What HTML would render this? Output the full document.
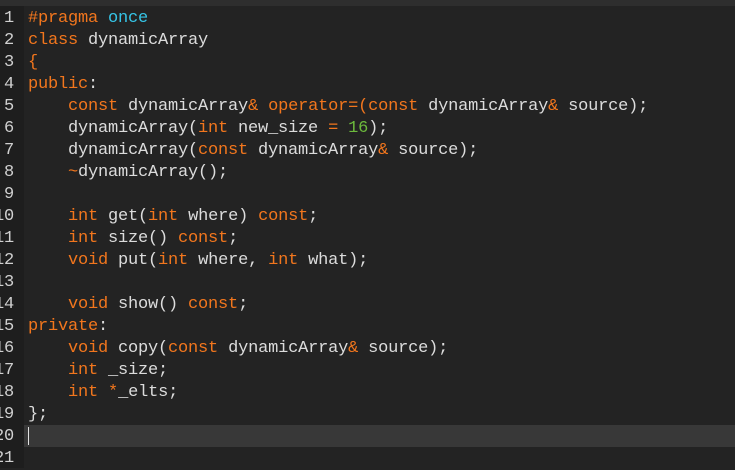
<!DOCTYPE html>
<html><head><meta charset="utf-8"><style>
html,body{margin:0;padding:0;}
body{width:735px;height:468px;background:#232323;position:relative;overflow:hidden;font-family:"Liberation Mono",monospace;font-size:17px;letter-spacing:-0.2px;}
.top{position:absolute;left:0;top:0;width:735px;height:6px;background:#2e2e2e;}
.gut{position:absolute;left:0;top:6px;width:24px;height:462px;background:#1e1e1e;}
.cur{position:absolute;left:24px;top:425px;width:711px;height:22px;background:#383838;}
.caret{position:absolute;left:28px;top:427px;width:1px;height:18px;background:#e0e0e0;}
.ln{position:absolute;right:721px;width:40px;text-align:right;color:#d0d0d0;height:22px;line-height:22px;margin-top:1px;}
.code{position:absolute;left:28px;top:8px;color:#dcdcdc;white-space:pre;line-height:22px;}
.k{color:#f2761d;}.c{color:#35c4e6;}.n{color:#6cba3c;}
</style></head><body>
<div class="top"></div><div class="gut"></div><div class="cur"></div><div class="caret"></div>
<div class="ln" style="top:7px">1</div><div class="ln" style="top:29px">2</div><div class="ln" style="top:51px">3</div><div class="ln" style="top:73px">4</div><div class="ln" style="top:95px">5</div><div class="ln" style="top:117px">6</div><div class="ln" style="top:139px">7</div><div class="ln" style="top:161px">8</div><div class="ln" style="top:183px">9</div><div class="ln" style="top:205px">10</div><div class="ln" style="top:227px">11</div><div class="ln" style="top:249px">12</div><div class="ln" style="top:271px">13</div><div class="ln" style="top:293px">14</div><div class="ln" style="top:315px">15</div><div class="ln" style="top:337px">16</div><div class="ln" style="top:359px">17</div><div class="ln" style="top:381px">18</div><div class="ln" style="top:403px">19</div><div class="ln" style="top:425px">20</div><div class="ln" style="top:447px">21</div>
<div class="code"><span class="k">#pragma</span> <span class="c">once</span>
<span class="k">class</span> dynamicArray
<span class="k">{</span>
<span class="k">public</span>:
    <span class="k">const</span> dynamicArray<span class="k">&amp;</span> <span class="k">operator=(const</span> dynamicArray<span class="k">&amp;</span> source);
    dynamicArray(<span class="k">int</span> new_size <span class="k">=</span> <span class="n">16</span>);
    dynamicArray(<span class="k">const</span> dynamicArray<span class="k">&amp;</span> source);
    <span class="k">~</span>dynamicArray();

    <span class="k">int</span> get(<span class="k">int</span> where) <span class="k">const</span>;
    <span class="k">int</span> size() <span class="k">const</span>;
    <span class="k">void</span> put(<span class="k">int</span> where, <span class="k">int</span> what);

    <span class="k">void</span> show() <span class="k">const</span>;
<span class="k">private</span>:
    <span class="k">void</span> copy(<span class="k">const</span> dynamicArray<span class="k">&amp;</span> source);
    <span class="k">int</span> _size;
    <span class="k">int</span> <span class="k">*</span>_elts;
};
</div>
</body></html>
